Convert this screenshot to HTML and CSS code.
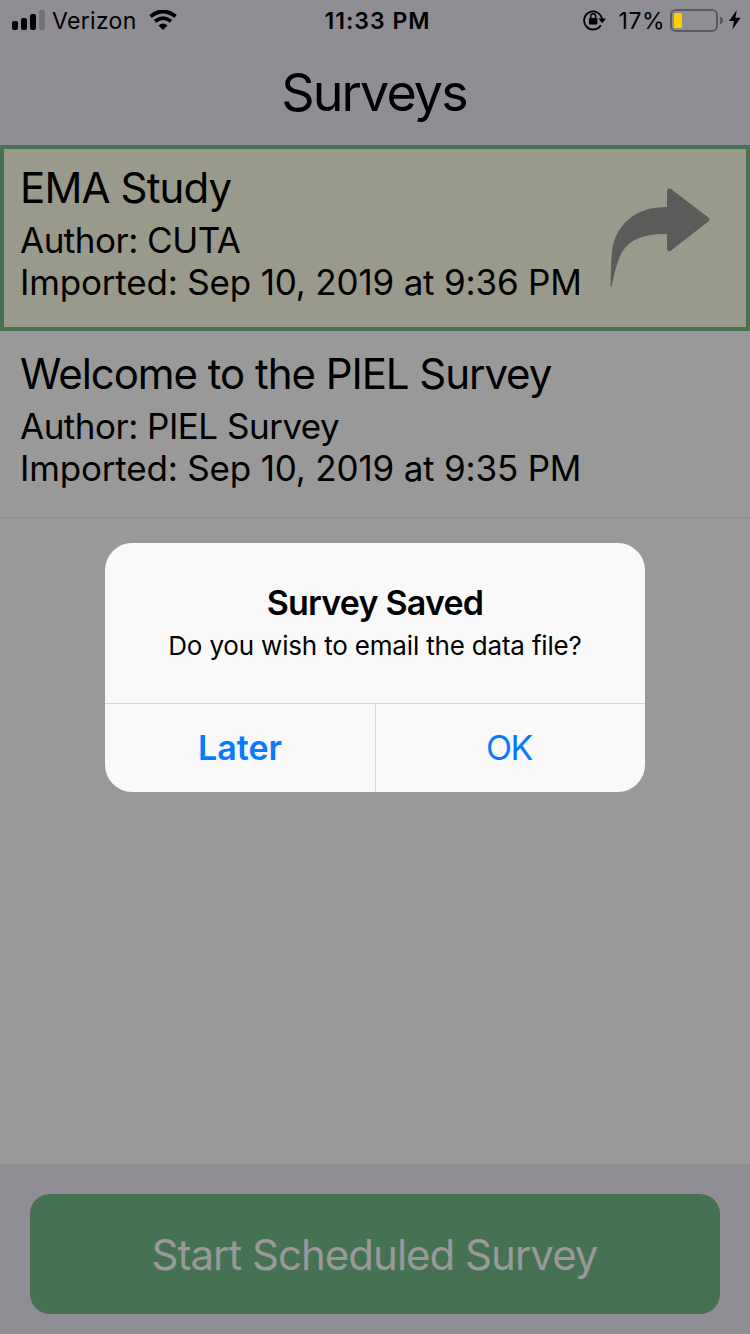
FILE: index.html
```
<!DOCTYPE html>
<html lang="en">
<head>
    <meta charset="UTF-8">
    <meta name="viewport" content="width=device-width, initial-scale=1.0">
    <title>Surveys</title>
    <link rel="stylesheet" href="styles.css">
</head>
<body>
    <div class="app">
        <header class="header">
            <div class="status-bar">
                <div class="status-left">
                    <svg class="signal" width="34" height="20" viewBox="0 0 34 20">
                        <rect x="0" y="11" width="6" height="9" rx="2"/>
                        <rect x="9" y="8" width="6" height="12" rx="2"/>
                        <rect x="18" y="4" width="6" height="16" rx="2"/>
                        <rect x="27" y="0" width="6" height="20" rx="2" fill="#737276"/>
                    </svg>
                    <span class="carrier">Verizon</span>
                    <svg class="wifi" width="28" height="20" viewBox="0 0 28 20">
                        <path d="M1.5 6.5Q14 -3.5 26.5 6.5" fill="none" stroke="#000" stroke-width="4"/>
                        <path d="M6 11.3Q14 5 22 11.3" fill="none" stroke="#000" stroke-width="3.8"/>
                        <path d="M14 20L9.4 15.4Q14 11.8 18.6 15.4Z"/>
                    </svg>
                </div>
                <span class="time">11:33 PM</span>
                <div class="status-right">
                    <svg class="lock" width="24" height="22" viewBox="0 0 24 22">
                        <path d="M17.8 16.2A9 9 0 1 1 19 10" fill="none" stroke="#000" stroke-width="1.8"/>
                        <path d="M15.4 9.6H23L19.2 14.2Z"/>
                        <rect x="6" y="9" width="8.4" height="6.4" rx="1"/>
                        <path d="M7.8 10V7.2a2.4 2.5 0 0 1 4.8 0V10" fill="none" stroke="#000" stroke-width="1.5"/>
                    </svg>
                    <span class="percent">17%</span>
                    <svg class="battery" width="54" height="24" viewBox="0 0 54 24">
                        <rect x="1" y="1" width="46" height="21" rx="5" fill="none" stroke="#5b5a5e" stroke-width="2"/>
                        <rect x="4" y="4" width="8" height="15" rx="1" fill="#ffcc00"/>
                        <path d="M50 7.5Q53 8.7 53 11.5T50 15.5Z" fill="#5b5a5e"/>
                    </svg>
                    <svg class="bolt" width="12" height="20" viewBox="0 0 12 20">
                        <path d="M7.8 0L0 11H5L3.4 19.5L11.6 7.8H6.4Z"/>
                    </svg>
                </div>
            </div>
            <h1>Surveys</h1>
        </header>

        <main class="survey-list">
            <div class="survey selected">
                <div class="survey-info">
                    <h2 class="ema">EMA Study</h2>
                    <p class="author">Author: CUTA</p>
                    <p class="imported">Imported: Sep 10, 2019 at 9:36 PM</p>
                </div>
                <svg class="share" width="100" height="100" viewBox="0 0 100 100">
                    <path d="M57 19V3Q57.5 -.5 61 1L99 30Q100 31.5 99 33L61 62.5Q57.5 64.5 57 61V46C35 45.5 20 51 12 64C8 71 4 86 1.5 98.5Q.5 99 .7 96C1 84 1 66 3 57C9 35 26 19 57 19Z" fill="#5b5b5a"/>
                </svg>
            </div>
            <div class="survey">
                <div class="survey-info">
                    <h2 class="welcome">Welcome to the PIEL Survey</h2>
                    <p class="author">Author: PIEL Survey</p>
                    <p class="imported">Imported: Sep 10, 2019 at 9:35 PM</p>
                </div>
            </div>
        </main>

        <footer class="footer">
            <button class="start-btn">Start Scheduled Survey</button>
        </footer>
    </div>

    <div class="overlay">
        <div class="dialog">
            <div class="dialog-body">
                <h3>Survey Saved</h3>
                <p>Do you wish to email the data file?</p>
            </div>
            <div class="dialog-buttons">
                <button class="later">Later</button>
                <button class="ok">OK</button>
            </div>
        </div>
    </div>
</body>
</html>
```

FILE: styles.css
```
* {
    box-sizing: border-box;
}

body {
    margin: 0;
    font-family: Inter, "Liberation Sans", sans-serif;
    color: #000;
    background-color: #999999;
}

h1, h2, h3, p {
    margin: 0;
    font-weight: normal;
    white-space: nowrap;
}

button {
    border: none;
    padding: 0;
    font-family: inherit;
    cursor: pointer;
}

svg {
    display: block;
    flex: none;
}

.app {
    display: flex;
    flex-direction: column;
    height: 1334px;
}

.header {
    height: 145px;
    background-color: #8f8e94;
}

.status-bar {
    display: grid;
    grid-template-columns: 1fr auto 1fr;
    align-items: center;
    height: 41px;
    padding: 1px 9px 0 12px;
    font-size: 23px;
}

.status-left, .status-right {
    display: flex;
    align-items: center;
}

.status-right {
    justify-content: flex-end;
}

.signal {
    margin-top: -2px;
}

.carrier {
    margin-left: 6px;
    letter-spacing: 0.3px;
}

.wifi {
    margin: -2px 0 0 12px;
}

.time {
    margin-left: 2px;
    font-weight: 600;
    letter-spacing: 1px;
}

.lock {
    margin-top: -2px;
}

.percent {
    margin: 0 5px 0 12px;
    letter-spacing: 0.5px;
}

.battery {
    margin-top: -1px;
}

.bolt {
    margin: -2px 0 0 5px;
}

.header h1 {
    padding-right: 2px;
    font-size: 52px;
    line-height: 64px;
    margin-top: 20px;
    text-align: center;
    letter-spacing: -1.9px;
}

.survey-list {
    flex: 1;
}

.survey {
    display: flex;
    justify-content: space-between;
    height: 188px;
    padding: 18px 20px 0;
    border-bottom: 2px solid #949495;
}

.selected {
    height: 186px;
    padding: 14px 36px 0 16px;
    border: 4px solid #457253;
    background-color: #99998c;
}

.survey h2 {
    font-size: 42px;
    line-height: 50px;
    letter-spacing: -1.05px;
}

.survey .ema {
    letter-spacing: -0.85px;
}

.survey p {
    font-size: 35px;
    line-height: 42px;
    letter-spacing: -0.18px;
}

.survey .author {
    margin-top: 6px;
    letter-spacing: -0.5px;
}

.share {
    margin-top: 25px;
}

.footer {
    height: 170px;
    padding: 30px;
    background-color: #8f8e94;
}

.start-btn {
    width: 100%;
    height: 120px;
    padding-right: 1px;
    border-radius: 20px;
    background-color: #457253;
    color: #999999;
    font-size: 42px;
    letter-spacing: -1px;
}

.overlay {
    position: absolute;
    top: 0;
    left: 0;
    width: 750px;
    height: 1334px;
    display: flex;
    justify-content: center;
    align-items: center;
}

.dialog {
    width: 540px;
    height: 249px;
    border-radius: 27px;
    background-color: #f9f9f9;
    overflow: hidden;
}

.dialog-body {
    height: 160px;
    padding-top: 40px;
    text-align: center;
}

.dialog h3 {
    font-size: 34px;
    line-height: 40px;
    font-weight: 600;
    letter-spacing: -0.8px;
}

.dialog p {
    margin-top: 7px;
    font-size: 26px;
    line-height: 32px;
    letter-spacing: -0.18px;
}

.dialog-buttons {
    display: grid;
    grid-template-columns: 1fr 1fr;
    height: 89px;
    border-top: 1px solid #d5d5d9;
}

.dialog-buttons button {
    background: none;
    color: #087aff;
    font-size: 34px;
}

.dialog-buttons .later {
    font-weight: 600;
}

.dialog-buttons .ok {
    padding-right: 3px;
    border-left: 1px solid #d5d5d9;
    letter-spacing: -1.5px;
}
```
